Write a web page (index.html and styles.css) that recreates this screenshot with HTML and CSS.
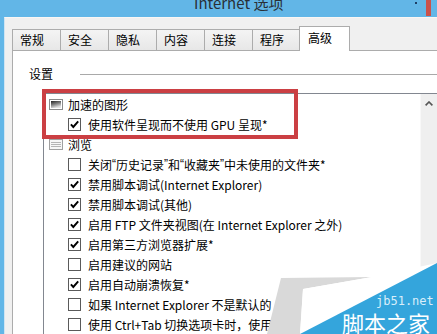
FILE: index.html
```html
<!DOCTYPE html>
<html lang="zh-CN">
<head>
  <meta charset="UTF-8" />
  <meta name="viewport" content="width=device-width, initial-scale=1.0" />
  <title>Internet 选项</title>
  <link rel="stylesheet" href="styles.css">
</head>
<body>
  <header class="titlebar">
    <span class="title">Internet 选项</span>
    <span class="help-dot"></span>
    <span class="close-btn"></span>
  </header>

  <div class="window">
    <ul class="tabs">
      <li class="tab">常规</li>
      <li class="tab">安全</li>
      <li class="tab">隐私</li>
      <li class="tab">内容</li>
      <li class="tab">连接</li>
      <li class="tab">程序</li>
      <li class="tab active">高级</li>
    </ul>

    <section class="panel">
      <div class="group-title">
        <span>设置</span>
        <span class="rule"></span>
      </div>

      <div class="listbox">
        <ul class="tree">
          <li class="node">
            <svg class="node-icon" viewBox="0 0 14 11">
              <defs>
                <linearGradient id="pic" x1="0" y1="0" x2="0.4" y2="1">
                  <stop offset="0" stop-color="#222" />
                  <stop offset="0.5" stop-color="#7c7c7c" />
                  <stop offset="1" stop-color="#e2e2e2" />
                </linearGradient>
              </defs>
              <rect x="0.5" y="0.5" width="13" height="10" fill="#fff" stroke="#8a8a8a" />
              <rect x="2" y="2" width="10" height="7" fill="url(#pic)" />
            </svg>
            加速的图形
          </li>
          <li class="item"><span class="check on"></span>使用软件呈现而不使用 GPU 呈现*</li>
          <li class="node">
            <svg class="node-icon" viewBox="0 0 14 11">
              <rect x="0.5" y="0.5" width="13" height="10" fill="#f6f6f6" stroke="#a0a0a0" />
              <path d="M2 3.5h10M2 5.5h10M2 7.5h10" stroke="#b4b4b4" />
            </svg>
            浏览
          </li>
          <li class="item"><span class="check"></span>关闭<span class="q">“</span>历史记录<span class="q">”</span>和<span class="q">“</span>收藏夹<span class="q">”</span>中未使用的文件夹*</li>
          <li class="item"><span class="check on"></span>禁用脚本调试(Internet Explorer)</li>
          <li class="item"><span class="check on"></span>禁用脚本调试(其他)</li>
          <li class="item"><span class="check on"></span>启用 FTP 文件夹视图(在 Internet Explorer 之外)</li>
          <li class="item"><span class="check on"></span>启用第三方浏览器扩展*</li>
          <li class="item"><span class="check"></span>启用建议的网站</li>
          <li class="item"><span class="check on"></span>启用自动崩溃恢复*</li>
          <li class="item"><span class="check"></span>如果 Internet Explorer 不是默认的</li>
          <li class="item"><span class="check"></span>使用 Ctrl+Tab 切换选项卡时，使用最</li>
        </ul>
        <div class="scrollbar">
          <svg class="arrow-up" viewBox="0 0 8 5">
            <path d="M0.6 4.4 4 1 7.4 4.4" fill="none" stroke="#555" stroke-width="1.6" />
          </svg>
        </div>
        <div class="highlight"></div>
      </div>
    </section>
  </div>

  <!-- site watermark in the corner -->
  <div class="watermark">
    <svg class="wm-shape" viewBox="0 0 177 75">
      <polygon points="21,19 112,18 43,30 40,75 7,75" fill="#d9d9d9" />
      <polygon points="43,30 112,18 177,4 40,75" fill="#ffffff" />
      <polygon points="40,75 177,4 177,75" fill="#34a5dc" />
    </svg>
    <span class="wm-url">jb51.net</span>
    <span class="wm-name">脚本之家</span>
  </div>
</body>
</html>
```

FILE: styles.css
```css
:root {
  --title-blue: #62b6e7;
  --face: #f0f0f0;
  --tab-border: #acacac;
  --list-border: #828790;
  --mark-red: #cb3f43;
}

* {
  box-sizing: border-box;
  margin: 0;
  padding: 0;
}

body {
  width: 437px;
  height: 334px;
  overflow: hidden;
  position: relative;
  background: var(--title-blue);
  font-family: "Noto Sans CJK SC", "Liberation Sans", sans-serif;
  font-size: 12px;
  color: #000;
}

/* Title bar */
.titlebar {
  height: 17px;
  display: flex;
  align-items: flex-start;
}
.title {
  margin-left: 194px;
  margin-top: -5px;
  font-size: 15px;
  line-height: 15px;
  color: #2a2f36;
  white-space: nowrap;
}
.help-dot {
  width: 2px;
  height: 2px;
  margin: 2px 0 0 132px;
  background: #1e3f66;
}
.close-btn {
  width: 5px;
  height: 16px;
  margin-left: 9px;
  background: #c9524c;
}

/* Dialog body */
.window {
  margin-left: 4px;
  height: 317px;
  background: var(--face);
  border-top: 1px solid #f9f6f4;
  border-left: 1px solid #cfe4f2;
  display: flex;
  flex-direction: column;
}

.tabs {
  list-style: none;
  display: flex;
  align-items: flex-end;
  padding: 0 0 0 7px;
  height: 32px;
}
.tab {
  width: 49px;
  height: 21px;
  padding-left: 7px;
  margin-left: -1px;
  border: 1px solid var(--tab-border);
  border-bottom: none;
  background: linear-gradient(#f4f4f4, #e7e7e7);
  display: flex;
  align-items: center;
  line-height: 1;
}
.tab:first-child {
  margin-left: 0;
}
.tab.active {
  width: 51px;
  height: 25px;
  margin-left: -2px;
  margin-bottom: -1px;
  padding-left: 8px;
  padding-bottom: 3px;
  background: #fff;
  position: relative;
  z-index: 1;
}

.panel {
  flex: 1;
  margin-left: 7px;
  background: #fff;
  border-top: 1px solid var(--tab-border);
  border-left: 1px solid var(--tab-border);
  display: flex;
  flex-direction: column;
  min-height: 0;
}

.group-title {
  display: flex;
  align-items: center;
  height: 14px;
  margin-top: 16px;
  padding-left: 16px;
  line-height: 14px;
}
.group-title .rule {
  flex: 1;
  height: 1px;
  margin-left: 27px;
  background: #a9a9a9;
}

/* Settings tree */
.listbox {
  flex: 1;
  margin: 12px 0 0 30px;
  border-top: 1px solid var(--list-border);
  border-left: 1px solid var(--list-border);
  display: flex;
  position: relative;
  min-height: 0;
}
.tree {
  flex: 1;
  min-width: 0;
  list-style: none;
  overflow: hidden;
}
.tree li {
  height: 20px;
  display: flex;
  align-items: center;
  white-space: nowrap;
}
.tree .q {
  font-family: "Liberation Sans", sans-serif;
}
.node {
  padding-left: 5px;
}
.node-icon {
  width: 14px;
  height: 11px;
  margin-right: 5px;
  flex: none;
}
.item {
  padding-left: 24px;
}
.check {
  width: 13px;
  height: 13px;
  margin-right: 7px;
  flex: none;
  border: 1px solid #5a5a5a;
  background: #fff;
}
.check.on {
  background: #fff url("data:image/svg+xml,%3Csvg xmlns='http://www.w3.org/2000/svg' viewBox='0 0 11 11'%3E%3Cpath d='M1.9 5.4 4.3 8 9.2 2.4' fill='none' stroke='%23000' stroke-width='1.9'/%3E%3C/svg%3E") center / 11px 11px no-repeat;
}

.scrollbar {
  width: 17px;
  background: #efefef;
  border-left: 1px solid #f8f8f8;
  display: flex;
  justify-content: center;
  padding-top: 7px;
}
.arrow-up {
  width: 8px;
  height: 5px;
}

.highlight {
  position: absolute;
  left: -2px;
  top: -5px;
  width: 256px;
  height: 50px;
  border: 4px solid var(--mark-red);
  pointer-events: none;
}

/* Watermark */
.watermark {
  position: absolute;
  right: 0;
  bottom: 0;
  width: 177px;
  height: 75px;
}
.wm-shape {
  display: block;
  width: 177px;
  height: 75px;
}
.wm-url {
  position: absolute;
  left: 116px;
  top: 36px;
  font-size: 12px;
  line-height: 13px;
  color: #d9eefa;
  font-family: "DejaVu Sans Mono", monospace;
  white-space: nowrap;
}
.wm-name {
  position: absolute;
  left: 82px;
  top: 52px;
  font-size: 22px;
  line-height: 22px;
  color: #fff;
  white-space: nowrap;
}
```
